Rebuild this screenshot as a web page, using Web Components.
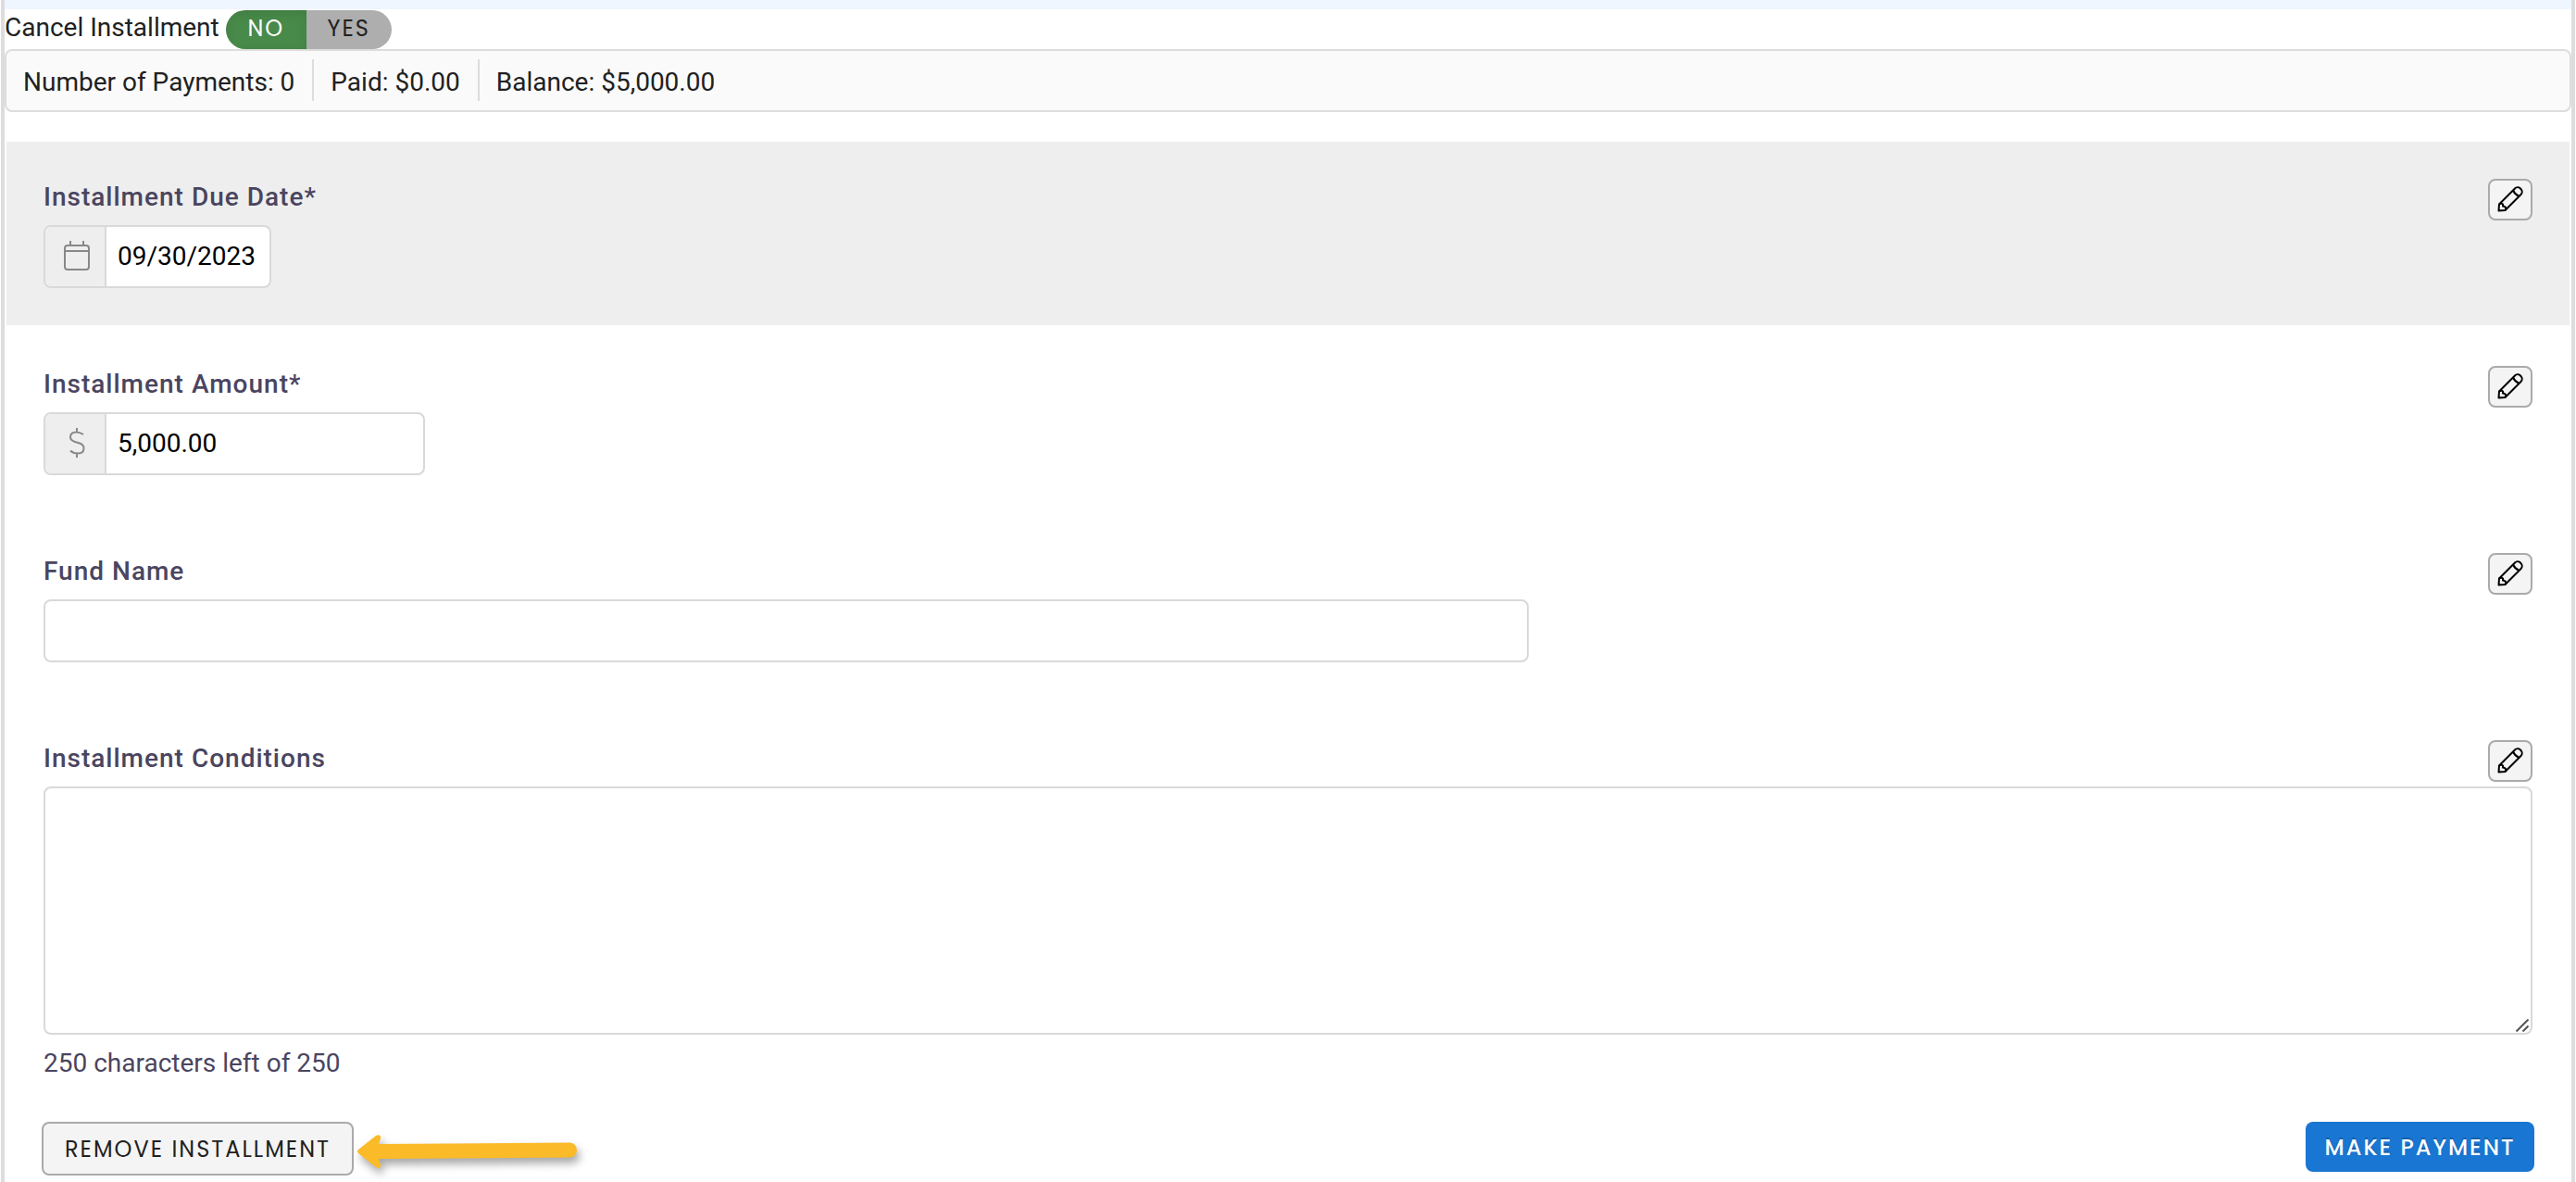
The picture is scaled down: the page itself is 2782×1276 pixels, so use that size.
<!DOCTYPE html>
<html lang="en">
<head>
<meta charset="utf-8">
<meta name="viewport" content="width=device-width, initial-scale=1">
<title>Installment</title>
<style>
	body {
		margin: 0;
		background-color: #fff;
		color: #212121;
		font-family: Roboto, "Liberation Sans", sans-serif;
		font-size: 28px;
		line-height: 40px;
	}
</style>
</head>
<body>
<installment-panel>
	<switch-toggle slot="top" label="Cancel Installment" off="NO" on="YES"></switch-toggle>
	<summary-bar slot="top">
		<summary-item>Number of Payments: 0</summary-item>
		<summary-item>Paid: $0.00</summary-item>
		<summary-item>Balance: $5,000.00</summary-item>
	</summary-bar>
	<form-field shaded label="Installment Due Date*" value="09/30/2023" icon="calendar" size="small"></form-field>
	<form-field label="Installment Amount*" value="5,000.00" icon="dollar" size="medium"></form-field>
	<form-field label="Fund Name" size="large"></form-field>
	<form-field label="Installment Conditions" limit="250"></form-field>
	<action-button slot="actions">REMOVE INSTALLMENT</action-button>
	<pointer-arrow slot="actions"></pointer-arrow>
	<action-button slot="end" primary>MAKE PAYMENT</action-button>
</installment-panel>

<script>
'use strict';
((window, document) => {
	const ICONS = {
		calendar: `
			<svg width="28" height="32" viewBox="0 0 28 32" fill="none" stroke="#888" stroke-width="2" aria-hidden="true">
				<rect x="1" y="5" width="26" height="26" rx="3"/>
				<path d="M1 11h26M7 0v5M21 0v5"/>
			</svg>`,
		dollar: `
			<svg width="28" height="32" viewBox="0 0 28 32" fill="none" stroke="#888" stroke-width="2" aria-hidden="true">
				<path d="M14 0v5M14 27v5M21 7C18 5 16 4.500 13 4.500C9 4.500 7 7 7 10C7 13 9 14 12 15L17 16.500C20 17.500 21.500 19 21.500 22C21.500 25.500 19 27.500 15 27.500C12 27.500 9 26.500 7 24.500"/>
			</svg>`,
		pencil: `
			<svg width="28" height="28" viewBox="0 0 28 28" fill="none" stroke="#000" stroke-width="2" stroke-linejoin="round" aria-hidden="true">
				<path d="M1.500 26.500L2 19.500L19 2.500C20.500 1 23 0.800 24.700 2.300L25.700 3.300C27.200 5 27 7.500 25.500 9L8.500 26Z"/>
				<path d="M17 4.500C18.500 8 20.500 9.500 23.500 11M2 19.500C4 18.300 5.500 18.500 6 19.500V21.500L8 22C9.500 23 9.500 24.500 8.500 26"/>
				<path d="M1 27V23.500L4.500 27Z" fill="#000" stroke="none"/>
			</svg>`
	};

	class InstallmentPanel extends HTMLElement {
		constructor() {
			super();
			let shadowRoot = this.attachShadow({mode: 'open'});
			shadowRoot.innerHTML = `
            <style>
                :host {
                    display: block;
                    box-sizing: border-box;
                    min-height: 100vh;
                    margin: 0 1px;
                    border: solid #ddd;
                    border-width: 0 4px;
                }

                header {
                    border-top: 10px solid #eff6ff;
                }

                .rows {
                    display: flex;
                    flex-direction: column;
                    gap: 4px;
                    margin: 32px 2px 4px;
                }

                footer {
                    display: flex;
                    align-items: flex-start;
                    justify-content: space-between;
                    padding: 0 40px;
                }

                .actions {
                    display: flex;
                    align-items: center;
                    gap: 4px;
                }
            </style>
            <header><slot name="top"></slot></header>
            <div class="rows"><slot></slot></div>
            <footer>
                <div class="actions"><slot name="actions"></slot></div>
                <slot name="end"></slot>
            </footer>
            `;
		}
	}

	class SwitchToggle extends HTMLElement {
		constructor() {
			super();
			let shadowRoot = this.attachShadow({mode: 'open'});
			shadowRoot.innerHTML = `
            <style>
                :host {
                    display: flex;
                    align-items: flex-start;
                    gap: 7px;
                }

                .pill {
                    display: flex;
                    height: 42px;
                    margin-top: 1px;
                    border-radius: 21px;
                    overflow: hidden;
                    font-family: Poppins, Lato, sans-serif;
                    font-size: 24px;
                    letter-spacing: 2px;
                }

                .pill label {
                    position: relative;
                    box-sizing: border-box;
                    min-width: 92px;
                    padding: 0 21px;
                    background-color: #aeaeae;
                    color: #212121;
                    text-align: center;
                }

                .pill label:first-child {
                    min-width: 87px;
                }

                .pill label:has(:checked) {
                    background-color: #488a4a;
                    box-shadow: inset 0 4px 12px rgba(0,0,0,0.1);
                    color: #fff;
                }

                input {
                    position: absolute;
                    inset: 0;
                    margin: 0;
                    opacity: 0;
                }
            </style>
            <span id="caption">${this.getAttribute('label')}</span>
            <div class="pill" role="radiogroup" aria-labelledby="caption">
                <label><input type="radio" name="state" checked>${this.getAttribute('off')}</label>
                <label><input type="radio" name="state">${this.getAttribute('on')}</label>
            </div>
            `;
		}
	}

	class SummaryBar extends HTMLElement {
		constructor() {
			super();
			let shadowRoot = this.attachShadow({mode: 'open'});
			shadowRoot.innerHTML = `
            <style>
                :host {
                    display: flex;
                    padding: 9px 0 10px;
                    border: 2px solid #ddd;
                    border-radius: 8px;
                    background-color: #fafafa;
                }
            </style>
            <slot></slot>
            `;
		}
	}

	class SummaryItem extends HTMLElement {
		constructor() {
			super();
			let shadowRoot = this.attachShadow({mode: 'open'});
			shadowRoot.innerHTML = `
            <style>
                :host {
                    display: block;
                    padding: 5px 19px 0 18px;
                    border-right: 2px solid #ddd;
                }

                :host(:last-child) {
                    border-right: 0;
                }
            </style>
            <slot></slot>
            `;
		}
	}

	class FormField extends HTMLElement {
		constructor() {
			super();
			let label = this.getAttribute('label');
			let icon = this.getAttribute('icon');
			let limit = this.getAttribute('limit');
			let shadowRoot = this.attachShadow({mode: 'open'});
			shadowRoot.innerHTML = `
            <style>
                :host {
                    display: block;
                    padding: 40px;
                }

                :host([shaded]) {
                    background-color: #eee;
                }

                .head {
                    display: flex;
                    align-items: flex-start;
                    justify-content: space-between;
                    margin-bottom: 5px;
                }

                label {
                    color: #4a4560;
                    font-weight: 500;
                    letter-spacing: 1px;
                }

                button {
                    display: flex;
                    align-items: center;
                    justify-content: center;
                    box-sizing: border-box;
                    width: 48px;
                    height: 45px;
                    padding: 0 0 2px;
                    border: 2px solid #aaa;
                    border-radius: 8px;
                    background-color: #f4f4f4;
                }

                .box {
                    position: relative;
                    display: flex;
                    box-sizing: border-box;
                    max-width: 100%;
                    border: 2px solid #d9d9d9;
                    border-radius: 8px;
                    background-color: #fff;
                    overflow: hidden;
                }

                :host([size=small]) .box { width: 246px; }
                :host([size=medium]) .box { width: 412px; }
                :host([size=large]) .box { width: 1604px; }

                .icon {
                    display: flex;
                    flex: none;
                    align-items: center;
                    justify-content: center;
                    box-sizing: border-box;
                    width: 66px;
                    padding: 0 0 2px 4px;
                    border-right: 2px solid #d9d9d9;
                    background-color: #eee;
                }

                input, textarea {
                    flex: 1;
                    box-sizing: border-box;
                    min-width: 0;
                    height: 64px;
                    margin: 0;
                    padding: 0 12px 2px;
                    border: 0;
                    background: none;
                    color: #000;
                    font: inherit;
                }

                textarea {
                    height: 264px;
                    padding: 12px;
                    resize: vertical;
                }

                textarea::-webkit-resizer {
                    display: none;
                }

                .grip {
                    position: absolute;
                    right: 2px;
                    bottom: 1px;
                    pointer-events: none;
                }

                .count {
                    margin-top: 11px;
                    margin-bottom: -1px;
                    color: #4a4560;
                }
            </style>
            <div class="head">
                <label for="control">${label}</label>
                <button type="button" aria-label="Edit ${label}">${ICONS.pencil}</button>
            </div>
            <div class="box">
                ${icon ? `<span class="icon">${ICONS[icon]}</span>` : ''}
                ${limit ? `
                <textarea id="control" maxlength="${limit}"></textarea>
                <svg class="grip" width="14" height="14" viewBox="0 0 14 14" stroke="#555" stroke-width="2" aria-hidden="true">
                    <path d="M0.500 13.500L13.500 0.500M7.500 13.500L13.500 7.500"/>
                </svg>` : `
                <input id="control" type="text" value="${this.getAttribute('value') || ''}">`}
            </div>
            ${limit ? `<div class="count"></div>` : ''}
            `;

			if (limit) {
				let textarea = shadowRoot.querySelector('textarea');
				let count = shadowRoot.querySelector('.count');
				let update = () => {
					count.textContent = `${limit - textarea.value.length} characters left of ${limit}`;
				};
				textarea.addEventListener('input', update);
				update();
			}
		}
	}

	class ActionButton extends HTMLElement {
		constructor() {
			super();
			let shadowRoot = this.attachShadow({mode: 'open'});
			shadowRoot.innerHTML = `
            <style>
                :host {
                    display: block;
                }

                button {
                    display: block;
                    box-sizing: border-box;
                    min-width: 337px;
                    height: 58px;
                    padding: 0 20px;
                    border: 2px solid #aaa;
                    border-radius: 8px;
                    background-color: #f4f4f4;
                    color: #212121;
                    font-family: Poppins, Lato, sans-serif;
                    font-size: 24px;
                    letter-spacing: 2px;
                }

                :host([primary]) button {
                    min-width: 247px;
                    height: 54px;
                    border: 0;
                    background-color: #1976d2;
                    color: #fff;
                    font-weight: 500;
                    text-shadow: 0 -2px 0 rgba(0,0,0,0.2);
                }
            </style>
            <button type="button"><slot></slot></button>
            `;
		}
	}

	class PointerArrow extends HTMLElement {
		constructor() {
			super();
			let shadowRoot = this.attachShadow({mode: 'open'});
			shadowRoot.innerHTML = `
            <style>
                :host {
                    display: block;
                    padding-top: 6px;
                }

                svg {
                    display: block;
                    overflow: visible;
                    filter: drop-shadow(3px 6px 5px rgba(0,0,0,0.35));
                }
            </style>
            <svg width="238" height="36" viewBox="0 0 238 36" fill="#fbba27" aria-hidden="true">
                <path d="M1 16L20 1C23 -1 26 1 25 4L23 10L229 8.500A8 8 0 0 1 229 24.500L23 26L25 32C26 35 23 37 20 35L1 20Q-1 18 1 16Z"/>
            </svg>
            `;
		}
	}

	window.customElements.define('installment-panel', InstallmentPanel);
	window.customElements.define('switch-toggle', SwitchToggle);
	window.customElements.define('summary-bar', SummaryBar);
	window.customElements.define('summary-item', SummaryItem);
	window.customElements.define('form-field', FormField);
	window.customElements.define('action-button', ActionButton);
	window.customElements.define('pointer-arrow', PointerArrow);
})(window, document);
</script>
</body>
</html>
